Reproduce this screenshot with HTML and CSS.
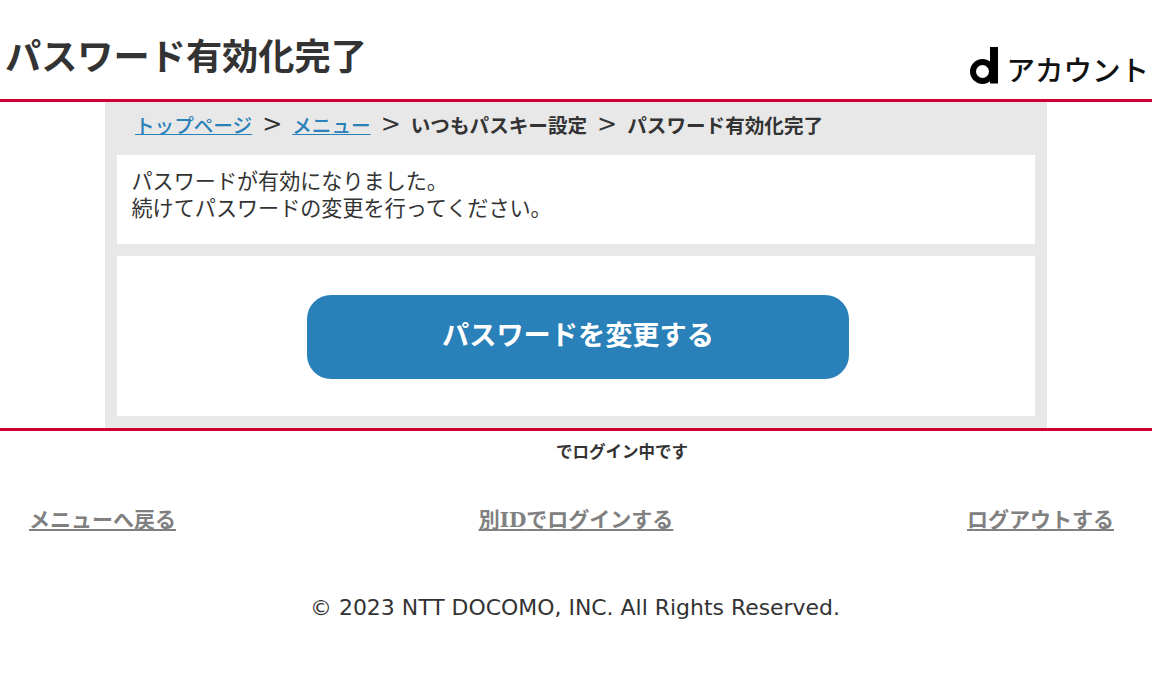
FILE: index.html
```html
<!DOCTYPE html>
<html lang="ja">
<head>
<meta charset="utf-8">
<title>パスワード有効化完了</title>
<link rel="stylesheet" href="styles.css">
</head>
<body>
<header class="header">
  <h1 class="title">パスワード有効化完了</h1>
  <div class="logo">
    <svg class="logo-d" width="28" height="37" viewBox="0 0 28 37" aria-hidden="true">
      <circle cx="12.5" cy="24.5" r="9.5" fill="none" stroke="#000" stroke-width="6"/>
      <rect x="20" y="0" width="8" height="36.5" fill="#000"/>
    </svg>
    <span class="logo-text">アカウント</span>
  </div>
</header>
<main class="main">
  <nav class="crumbs">
    <a href="#">トップページ</a><span class="sep">&gt;</span>
    <a href="#">メニュー</a><span class="sep">&gt;</span>
    <b>いつもパスキー設定</b><span class="sep">&gt;</span>
    <b>パスワード有効化完了</b>
  </nav>
  <section class="box msg">パスワードが有効になりました。<br>続けてパスワードの変更を行ってください。</section>
  <section class="box action"><a class="btn" href="#">パスワードを変更する</a></section>
</main>
<footer class="footer">
  <p class="login">でログイン中です</p>
  <div class="links">
    <a href="#">メニューへ戻る</a>
    <a class="mid" href="#">別<span class="id">ID</span>でログインする</a>
    <a href="#">ログアウトする</a>
  </div>
  <p class="copy">© 2023 NTT DOCOMO, INC. All Rights Reserved.</p>
</footer>
</body>
</html>
```
FILE: styles.css
```css
* { box-sizing: border-box; }
html, body { margin: 0; padding: 0; }
body {
  background: #fff;
  color: #333;
  font-family: "DejaVu Sans", "Noto Sans CJK JP", sans-serif;
}
.header {
  height: 102px;
  border-bottom: 3px solid #cc0033;
  display: flex;
  justify-content: space-between;
  align-items: flex-end;
  padding: 0 3px 0 5px;
}
.title {
  margin: 0 0 21px;
  font-size: 36.2px;
  line-height: 48px;
  font-weight: 700;
  font-family: "Noto Sans CJK JP", sans-serif;
}
.logo { display: flex; align-items: flex-end; gap: 8px; margin-bottom: 15px; }
.logo-d { display: block; }
.logo-text {
  font-family: "Noto Sans CJK JP", sans-serif;
  font-size: 28.5px;
  line-height: 30px;
  font-weight: 500;
  color: #111;
}
.main {
  width: 942px;
  margin-left: 105px;
  background: #e8e8e8;
  padding: 0 12px 12px;
}
.crumbs {
  height: 53px;
  padding: 0 0 9px 18px;
  display: flex;
  align-items: center;
  font-size: 19.6px;
  font-weight: 500;
  font-family: "Noto Sans CJK JP", sans-serif;
}
.crumbs a { color: #2a80b9; }
.crumbs b { font-weight: 700; }
.sep { margin: 0 10px 0 10px; font-size: 24px; font-weight: 400; font-family: "DejaVu Sans", sans-serif; }
.box { background: #fff; }
.msg {
  height: 89px;
  padding: 12px 14.5px;
  font-size: 21.1px;
  line-height: 27px;
  font-family: "Noto Sans CJK JP", sans-serif;
}
.action {
  margin-top: 12px;
  height: 160px;
  display: flex;
  align-items: center;
  justify-content: center;
}
.btn {
  width: 542px;
  height: 84px;
  margin: 2px 0 0 4px;
  padding-bottom: 9px;
  border-radius: 24px;
  background: #2a80b9;
  color: #fff;
  font-family: "Noto Sans CJK JP", sans-serif;
  font-weight: 700;
  font-size: 27.2px;
  text-decoration: none;
  display: flex;
  align-items: center;
  justify-content: center;
}
.footer { border-top: 3px solid #cc0033; }
.login {
  margin: 9px 0 0;
  text-align: center;
  padding-left: 92px;
  font-size: 16.5px;
  line-height: 22px;
  font-weight: 700;
  font-family: "Noto Sans CJK JP", sans-serif;
}
.links {
  margin-top: 41px;
  padding: 0 38px 0 29px;
  display: flex;
  justify-content: space-between;
  font-size: 21px;
  line-height: 30px;
  font-weight: 700;
  font-family: "Noto Sans CJK JP", sans-serif;
}
.links a { color: #808080; }
.links .mid { margin-left: 9px; }
.id { font-family: "DejaVu Serif", serif; font-size: 20px; }
.copy {
  margin: 59px 0 0;
  text-align: center;
  font-size: 21.95px;
  line-height: 28px;
  padding-right: 2px;
}
```
